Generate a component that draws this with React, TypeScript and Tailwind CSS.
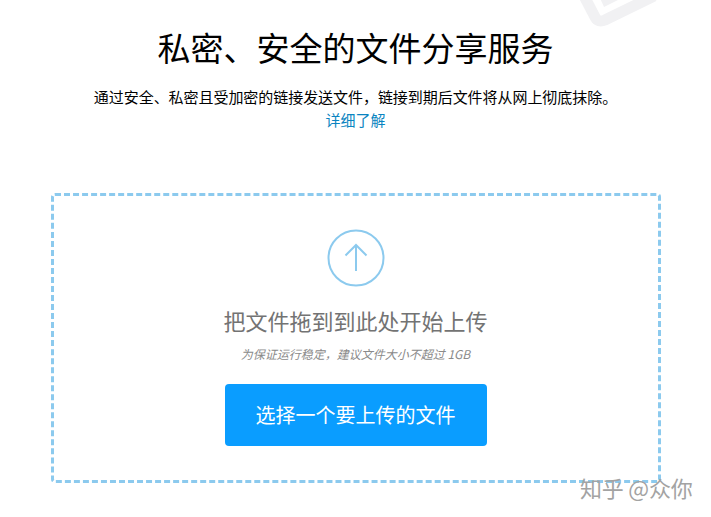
export default function App() {
  return (
    <main
      className="relative h-[517px] w-[711px] overflow-hidden bg-white"
      style={{ fontFamily: '"Noto Sans CJK SC", "Liberation Sans", sans-serif' }}
    >
      {/* faint logo in the corner */}
      <svg className="absolute left-[570px] top-0" width="100" height="30" viewBox="0 0 100 30" fill="none">
        <path d="M13 -6 L25 17 Q28 23 35 20 L84 -4" stroke="#f1f1f3" strokeWidth="11" />
        <path d="M30 -2 L34 7 L52 -2 Z" fill="#f1f1f3" />
      </svg>

      <div className="flex flex-col items-center pt-[25px]">
        <h1 className="text-[33px] leading-[44px] text-black">私密、安全的文件分享服务</h1>
        <p className="mt-[17px] text-[15px] leading-[22px] tracking-[-0.05px] text-black">
          通过安全、私密且受加密的链接发送文件{"\uFF0C"}链接到期后文件将从网上彻底抹除。
        </p>
        <a className="mt-[2px] text-[15px] leading-[20px] text-[#0a84c1]">详细了解</a>

        <section className="mt-[63px] flex h-[290px] w-[610px] flex-col items-center rounded-[4px] border-[3px] border-dashed border-[#8ccaee] pt-[33px]">
          <svg width="58" height="58" viewBox="0 0 58 58" fill="none" stroke="#8ccaee">
            <circle cx="29" cy="29" r="27.5" strokeWidth="2" />
            <path d="M29 42 V16 M18.5 26.5 L29 16 L39.5 26.5" strokeWidth="2" />
          </svg>
          <h2 className="mt-[17px] text-[22px] leading-[32px] text-[#737373]">把文件拖到到此处开始上传</h2>
          <p className="mt-[10px] text-[12px] italic leading-[16px] text-[#8a8a8a]">
            为保证运行稳定{"\uFF0C"}建议文件大小不超过 1GB
          </p>
          <button
            type="button"
            className="mt-[22px] h-[62px] w-[262px] rounded-[4px] bg-[#0a9dff] text-[20px] text-white"
          >
            选择一个要上传的文件
          </button>
        </section>
      </div>

      <span className="absolute left-[580px] top-[473px] text-[22px] leading-[28px] tracking-[-0.2px] text-[#a3a3a3]">知乎 @众你</span>
    </main>
  );
}
